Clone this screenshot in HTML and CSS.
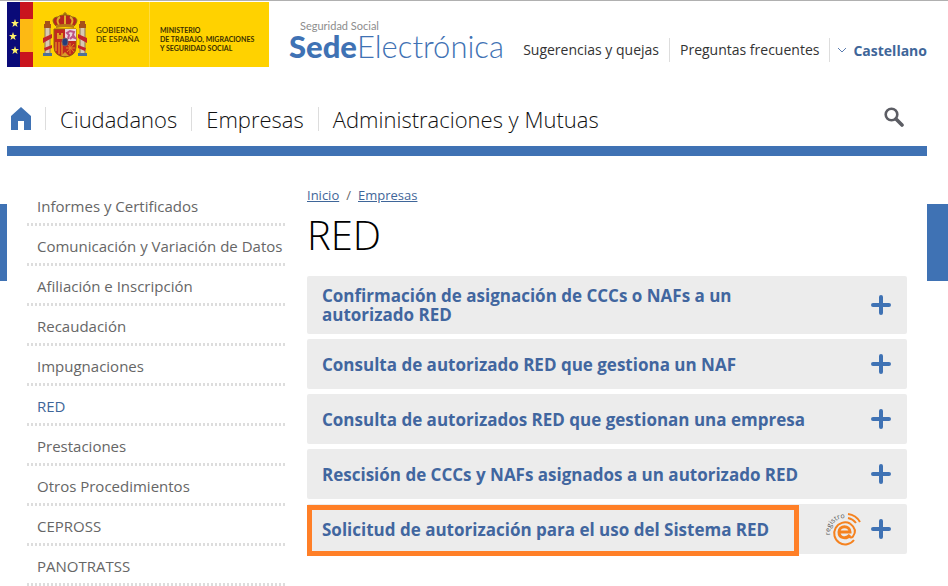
FILE: index.html
```html
<!DOCTYPE html>
<html lang="es">
<head>
    <meta charset="UTF-8">
    <meta name="viewport" content="width=device-width, initial-scale=1.0">
    <title>RED - Sede Electrónica de la Seguridad Social</title>
    <link rel="stylesheet" href="styles.css">
</head>
<body>

<!-- Header -->
<header class="header">
    <div class="gov">
        <svg class="gov-flag" viewBox="0 0 26 65" aria-hidden="true">
            <rect width="13" height="65" fill="#0a0a78"/>
            <rect x="13" width="13" height="65" fill="#c9141e"/>
            <rect x="13" y="17" width="13" height="33" fill="#fdb913"/>
            <g fill="#fff36b">
                <path id="star" d="M8 17l1 3h3l-2.400 2 1 3L8 23.200 5.400 25l1-3L4 20h3z"/>
                <use href="#star" x="-2" y="13"/>
                <use href="#star" y="27"/>
            </g>
        </svg>
        <svg class="gov-shield" viewBox="0 0 44 46" aria-hidden="true">
            <!-- crown -->
            <path d="M13 14c-5-5-3-9 2-9 2-2 5-2 7-2s5 0 7 2c5 0 7 4 2 9z" fill="#b5261e" stroke="#8a6412"/>
            <path d="M16 13c-3-4-1-7 1-8M28 13c3-4 1-7-1-8M22 3v10" fill="none" stroke="#e2ad2a" stroke-width="2"/>
            <path d="M22 0v4M20 2h4" stroke="#8a5a12"/>
            <path d="M13 13q9-2 18 0v3q-9-2-18 0z" fill="#b87816"/>
            <!-- columns -->
            <path d="M2 15h5v28H2zM37 15h5v28h-5z" fill="#d8c9b0" stroke="#8d7752"/>
            <path d="M1 12h7v4H1zM36 12h7v4h-7zM2 9h5v3H2zM37 9h5v3h-5z" fill="#a5511b"/>
            <path d="M0 26l9-4v4l-9 5zM44 26l-9-4v4l9 5zM1 36l8-3v3l-7 3zM43 36l-8-3v3l7 3z" fill="#c3252a"/>
            <path d="M0 41h9v3H0zM35 41h9v3h-9z" fill="#4f7195"/>
            <!-- shield -->
            <path d="M11 17h22v18q0 9-11 10-11-1-11-10z" fill="#c2281f" stroke="#93600f"/>
            <path d="M22 17h11v12H22z" fill="#e9d5dd"/>
            <path d="M25 27l1-4-2-2 3-2 4 1-1 3 2 3-3-1-2 2" fill="none" stroke="#bd5384" stroke-width="2"/>
            <path d="M14 27v-6h2v2h2v-2h2v6z" fill="#df9d22"/>
            <path d="M13 30v9M16 30v12M19 30v13" stroke="#f0ad20" stroke-width="1"/>
            <path d="M24 32l7 8M31 32l-7 8M23 36h9M27 31v11" stroke="#e08a20"/>
            <ellipse cx="22" cy="30" rx="3" ry="4" fill="#243d7a" stroke="#75606b"/>
            <path d="M18 44l4-4 4 4z" fill="#d89e27"/>
        </svg>
        <p class="gov-name">GOBIERNO<br>DE ESPAÑA</p>
        <p class="gov-ministry">MINISTERIO<br>DE TRABAJO, MIGRACIONES<br>Y SEGURIDAD SOCIAL</p>
    </div>

    <a class="brand" href="#">
        <span class="brand-top">Seguridad Social</span>
        <span class="brand-name"><b>Sede</b>Electrónica</span>
    </a>

    <div class="tools">
        <a href="#">Sugerencias y quejas</a>
        <a href="#">Preguntas frecuentes</a>
        <button class="lang" type="button">
            <svg width="10" height="6" viewBox="0 0 10 6" aria-hidden="true"><path d="M1 1l4 4 4-4" fill="none" stroke="#5b7db0"/></svg>
            Castellano
        </button>
    </div>
</header>

<!-- Main menu -->
<nav class="menu">
    <a class="home" href="#" aria-label="Inicio">
        <svg width="20" height="23" viewBox="0 0 20 23" aria-hidden="true"><path d="M10 0l10 9v14h-7v-9H7v9H0V9z" fill="#3f72b4"/></svg>
    </a>
    <a href="#">Ciudadanos</a>
    <a href="#">Empresas</a>
    <a href="#">Administraciones y Mutuas</a>
    <button class="search" type="button" aria-label="Buscar">
        <svg width="20" height="20" viewBox="0 0 20 20" aria-hidden="true">
            <circle cx="7.500" cy="7.500" r="5.800" fill="none" stroke="#5c5d64" stroke-width="2.600"/>
            <path d="M12 12l6 6" stroke="#5c5d64" stroke-width="3.600" stroke-linecap="round"/>
        </svg>
    </button>
</nav>

<div class="page">
    <div class="tab"></div>

    <!-- Side menu -->
    <nav class="side">
        <a href="#">Informes y Certificados</a>
        <a href="#">Comunicación y Variación de Datos</a>
        <a href="#">Afiliación e Inscripción</a>
        <a href="#">Recaudación</a>
        <a href="#">Impugnaciones</a>
        <a class="active" href="#">RED</a>
        <a href="#">Prestaciones</a>
        <a href="#">Otros Procedimientos</a>
        <a href="#">CEPROSS</a>
        <a href="#">PANOTRATSS</a>
    </nav>

    <main class="content">
        <div class="crumbs"><a href="#">Inicio</a><span>/</span><a href="#">Empresas</a></div>
        <h1>RED</h1>

        <svg class="sprite" aria-hidden="true">
            <symbol id="plus" viewBox="0 0 20 20"><path d="M10 2v16M2 10h16" stroke="#3f72b4" stroke-width="4" stroke-linecap="round"/></symbol>
        </svg>

        <button class="item" type="button">
            <span class="item-title">Confirmación de asignación de CCCs o NAFs a un autorizado RED</span>
            <svg class="plus" aria-hidden="true"><use href="#plus"/></svg>
        </button>
        <button class="item" type="button">
            <span class="item-title">Consulta de autorizado RED que gestiona un NAF</span>
            <svg class="plus" aria-hidden="true"><use href="#plus"/></svg>
        </button>
        <button class="item" type="button">
            <span class="item-title">Consulta de autorizados RED que gestionan una empresa</span>
            <svg class="plus" aria-hidden="true"><use href="#plus"/></svg>
        </button>
        <button class="item" type="button">
            <span class="item-title">Rescisión de CCCs y NAFs asignados a un autorizado RED</span>
            <svg class="plus" aria-hidden="true"><use href="#plus"/></svg>
        </button>
        <button class="item marked" type="button">
            <span class="item-title">Solicitud de autorización para el uso del Sistema RED</span>
            <!-- electronic registry -->
            <svg class="registry" viewBox="0 0 36 34" aria-hidden="true">
                <path id="arc" d="M5 23A15 15 0 0 1 20 6" fill="none"/>
                <text class="registry-text"><textPath href="#arc">registro</textPath></text>
                <g fill="none" stroke="#f5821f">
                    <path d="M25 11.500A11 11 0 1 0 29 28" stroke-width="2"/>
                    <path d="M14 20h11c0-7-11-7-11 0 0 7 8 7 11 3" stroke-width="3"/>
                    <path d="M25 11.500q8 6 3 13-2 2-4 0" stroke-width="2"/>
                    <path d="M23 6q5 1 8 5" stroke-width="2"/>
                    <path d="M23 2q8 1 12 8" stroke-width="2"/>
                </g>
            </svg>
            <svg class="plus" aria-hidden="true"><use href="#plus"/></svg>
        </button>
    </main>

    <div class="tab tab-right"></div>
</div>

</body>
</html>
```
FILE: styles.css
```css
*,
*::after {
    box-sizing: border-box;
}
body {
    margin: 0;
    font-family: "Open Sans", sans-serif;
    background-color: #fff;
    border-top: 1px solid #b0b0b0;
    overflow: hidden;
}
a {
    color: inherit;
    text-decoration: none;
}
button {
    padding: 0;
    border: none;
    background: none;
    font-family: inherit;
    text-align: left;
    cursor: pointer;
}
svg {
    display: block;
    flex: none;
}

/* Header */
.header {
    display: flex;
    margin: 0 21px 0 7px;
    padding-top: 1px;
}
.gov {
    display: flex;
    align-items: center;
    flex: none;
    width: 262px;
    height: 65px;
    background-color: #ffd200;
    font-family: Lato, sans-serif;
    font-size: 8px;
    font-weight: 500;
    line-height: 9px;
    color: #3b3000;
    white-space: nowrap;
}
.gov p {
    margin: 0;
}
.gov-flag {
    width: 26px;
    height: 65px;
}
.gov-shield {
    width: 44px;
    height: 46px;
    margin: 0 9px 0 10px;
}
.gov-name {
    width: 53px;
}
.gov-ministry {
    height: 65px;
    padding: 24px 0 0 10px;
    border-left: 1px solid #ffdc40;
    font-size: 7px;
    font-weight: 700;
}
.brand {
    display: flex;
    flex-direction: column;
    margin-left: 20px;
    padding-top: 17px;
    font-family: Lato, sans-serif;
    white-space: nowrap;
}
.brand-top {
    padding-left: 11px;
    font-size: 11px;
    line-height: 14px;
    color: #8d8d8d;
}
.brand-name {
    font-size: 31px;
    font-weight: 300;
    line-height: 26px;
    color: #3f72b4;
}
.brand-name b {
    font-weight: 900;
}
.tools {
    display: flex;
    align-items: center;
    margin: 36px 0 0 auto;
    height: 24px;
    font-size: 14px;
    color: #333;
    white-space: nowrap;
}
.tools a {
    padding-right: 10px;
    margin-right: 10px;
    border-right: 1px solid #ddd;
    line-height: 24px;
}
.lang {
    display: flex;
    align-items: center;
    gap: 6px;
    font-size: 14px;
    font-weight: 700;
    color: #3f6699;
}
.tools a + .lang {
    margin-left: -3px;
}

/* Main menu */
.menu {
    display: flex;
    align-items: center;
    height: 89px;
    margin: 0 21px 0 7px;
    padding: 24px 23px 0 4px;
    border-bottom: 10px solid #3f72b4;
    font-size: 22px;
    font-weight: 300;
    color: #111;
    white-space: nowrap;
}
.menu a {
    padding-right: 14px;
    margin-right: 14px;
    border-right: 1px solid #ddd;
    line-height: 24px;
}
.menu a:nth-of-type(4) {
    border-right: none;
}
.search {
    margin-left: auto;
    padding-bottom: 4px;
}

/* Body */
.page {
    display: flex;
    align-items: flex-start;
}
.tab {
    flex: none;
    width: 7px;
    height: 77px;
    margin-top: 48px;
    background-color: #3f72b4;
}
.tab-right {
    width: 21px;
}
.side {
    flex: none;
    width: 259px;
    margin: 30px 21px 0 20px;
    font-size: 15px;
    color: #666;
    white-space: nowrap;
}
.side a {
    display: block;
    height: 40px;
    padding-left: 10px;
    line-height: 40px;
    background: repeating-linear-gradient(to right, #ddd 0 2px, transparent 2px 4px) left bottom / 100% 3px no-repeat;
}
.side .active {
    color: #3f6699;
}
.content {
    flex: 1;
    margin: 30px 20px 0 0;
}
.crumbs {
    display: flex;
    gap: 7px;
    font-size: 13px;
    line-height: 18px;
    color: #666;
}
.crumbs a {
    color: #3f6699;
    text-decoration: underline;
}
h1 {
    margin: 0 0 10px;
    font-size: 40px;
    font-weight: 300;
    line-height: 62px;
    color: #000;
}
.sprite {
    display: none;
}

/* Accordion */
.item {
    position: relative;
    display: flex;
    align-items: center;
    width: 100%;
    min-height: 50px;
    margin-bottom: 5px;
    padding: 10px 16px 10px 15px;
    border-radius: 2px;
    background-color: #ececec;
    font-size: 17px;
    font-weight: 700;
    line-height: 19px;
    color: #41669f;
}
.item-title {
    max-width: 490px;
    margin-right: auto;
}
.plus {
    width: 20px;
    height: 20px;
    margin-left: 10px;
}
.marked {
    padding-top: 8px;
    padding-bottom: 8px;
}
.marked::after {
    content: "";
    position: absolute;
    top: 1px;
    left: 0;
    width: 492px;
    height: 51px;
    border: 5px solid #ff7f27;
}
.registry {
    width: 36px;
    height: 34px;
    overflow: visible;
}
.registry-text {
    font-size: 7px;
    font-weight: 400;
    fill: #555;
}
```
